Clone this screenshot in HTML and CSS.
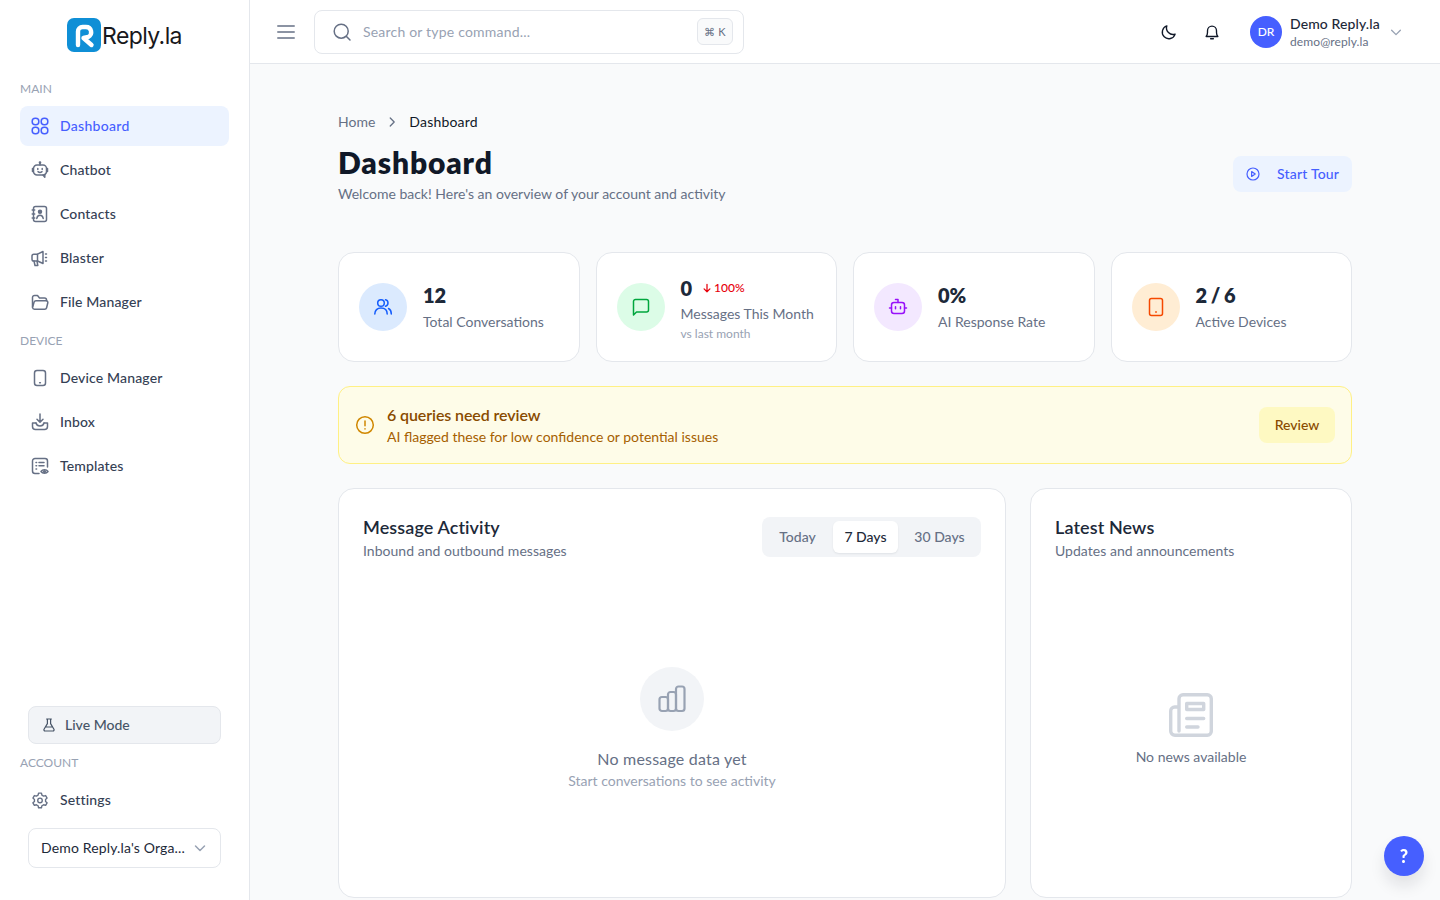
FILE: index.html
```html
<!DOCTYPE html>
<html lang="en">
<head>
  <meta charset="UTF-8">
  <meta name="viewport" content="width=device-width, initial-scale=1.0">
  <title>Reply.la Dashboard</title>
  <link rel="stylesheet" href="styles.css">
</head>
<body>
  <div class="app">

    <!-- Sidebar -->
    <aside class="sidebar">
      <div class="logo">
        <svg class="logo-mark" width="34" height="34" viewBox="0 0 34 34">
          <rect width="34" height="34" rx="7" fill="#0f8fd6"/>
          <path d="M11 27V13.500A4.500 4.500 0 0 1 15.500 9H19a5.200 5.200 0 0 1 2.200 9.900L16.500 20l8 7" fill="none" stroke="#fff" stroke-width="4.400" stroke-linecap="round" stroke-linejoin="round"/>
        </svg>
        <span class="logo-text">Reply.la</span>
      </div>

      <div class="nav-label">MAIN</div>
      <nav class="nav">
        <a class="nav-item active" href="#">
          <svg class="icon" viewBox="0 0 20 20"><rect x="2.200" y="2.200" width="6.600" height="6.600" rx="3"/><rect x="11.200" y="2.200" width="6.600" height="6.600" rx="3"/><rect x="2.200" y="11.200" width="6.600" height="6.600" rx="3"/><rect x="11.200" y="11.200" width="6.600" height="6.600" rx="3"/></svg>
          Dashboard
        </a>
        <a class="nav-item" href="#">
          <svg class="icon" viewBox="0 0 20 20"><path d="M10 2.500v2.400"/><circle cx="10" cy="2.600" r=".6"/><path d="M7 5h6a3.500 3.500 0 0 1 3.500 3.500v3A3.500 3.500 0 0 1 13 15H7.500a3.500 3.500 0 0 1-4-3.500v-3A3.500 3.500 0 0 1 7 5z"/><path d="M3.200 8.500H2.500v3h.7M16.800 8.500h.7v3h-.7M13 15l1.800 2.200V14.500"/><path d="M7.800 8.600v1M12.200 8.600v1M8 11.700c1.200.9 2.800.9 4 0"/></svg>
          Chatbot
        </a>
        <a class="nav-item" href="#">
          <svg class="icon" viewBox="0 0 20 20"><rect x="3.500" y="2.500" width="13" height="15" rx="2"/><path d="M2.200 6h2.500M2.200 10h2.500M2.200 14h2.500"/><circle cx="10" cy="7.800" r="1.500" fill="currentColor"/><path d="M6.800 14.500c.3-2.200 1.500-3.200 3.200-3.200s2.900 1 3.200 3.200"/></svg>
          Contacts
        </a>
        <a class="nav-item" href="#">
          <svg class="icon" viewBox="0 0 20 20"><path d="M13 3.500v12L7.500 13H3.800A1.800 1.800 0 0 1 2 11.200V8a1.800 1.800 0 0 1 1.800-1.800h3.700L13 3.500z"/><path d="M7.500 6.200V13M4 13l1 4.500h2.800L7 13.200"/><path d="M15.500 6h2.300M15.500 9.500h2.300M15.500 13h2.300" stroke-dasharray="1 1.300"/></svg>
          Blaster
        </a>
        <a class="nav-item" href="#">
          <svg class="icon" viewBox="0 0 20 20"><path d="M2.500 15V5.500a2 2 0 0 1 2-2h3l2 2.500h5a2 2 0 0 1 2 2v.800"/><path d="M2.500 15.500l1.600-5.500a2 2 0 0 1 1.900-1.200h10.300a1.500 1.500 0 0 1 1.500 1.900l-1.200 5a2 2 0 0 1-1.900 1.500H4.500a2 2 0 0 1-2-1.700z"/></svg>
          File Manager
        </a>
      </nav>

      <div class="nav-label nav-label-gap">DEVICE</div>
      <nav class="nav">
        <a class="nav-item" href="#">
          <svg class="icon" viewBox="0 0 20 20"><rect x="4.500" y="2.500" width="11" height="15" rx="2.500"/><path d="M9.600 14.800h.8"/></svg>
          Device Manager
        </a>
        <a class="nav-item" href="#">
          <svg class="icon" viewBox="0 0 20 20"><path d="M10 2v8M7 7.200l3 3 3-3"/><path d="M6 11H2.500v3.500a3 3 0 0 0 3 3h9a3 3 0 0 0 3-3V11H14"/><path d="M6 11c.5 2 2 3 4 3s3.500-1 4-3"/></svg>
          Inbox
        </a>
        <a class="nav-item" href="#">
          <svg class="icon" viewBox="0 0 20 20"><path d="M9 17.500H5A2.500 2.500 0 0 1 2.500 15V5A2.500 2.500 0 0 1 5 2.500h10A2.500 2.500 0 0 1 17.500 5v6"/><path d="M6 6.500h.6M6 9.800h.6M6 13h.6M9 6.500h5M9 9.800h5"/><path d="M11 15.500c1.600-2.400 5.400-2.400 7 0-1.600 2.400-5.400 2.400-7 0z"/><circle cx="14.500" cy="15.500" r=".8"/></svg>
          Templates
        </a>
      </nav>

      <div class="sidebar-bottom">
        <button class="live-mode">
          <svg class="icon" viewBox="0 0 20 20"><path d="M7 2.500h6M8 2.500v5.800l-4.200 7A1.500 1.500 0 0 0 5 17.500h10a1.500 1.500 0 0 0 1.200-2.200L12 8.300V2.500M5.800 12.500h8.400"/></svg>
          Live Mode
        </button>
        <div class="nav-label nav-label-account">ACCOUNT</div>
        <a class="nav-item" href="#">
          <svg class="icon" viewBox="-1 -1 22 22"><path d="M8.400 2.500h3.200l.5 2.200 1.900 1.100 2.200-.7 1.600 2.800-1.700 1.500v2.200l1.700 1.500-1.600 2.800-2.200-.7-1.900 1.100-.5 2.200H8.400l-.5-2.200L6 15.200l-2.200.7-1.600-2.800 1.700-1.500V9.400L2.200 7.900l1.600-2.800 2.200.7 1.900-1.100z"/><circle cx="10" cy="10.500" r="2.500"/></svg>
          Settings
        </a>
        <button class="org-select">
          <span>Demo Reply.la's Orga...</span>
          <svg class="chevron" viewBox="0 0 16 16"><path d="M3.500 6l4.500 4.500L12.500 6"/></svg>
        </button>
      </div>
    </aside>

    <div class="page">
      <!-- Top bar -->
      <header class="topbar">
        <svg class="menu-icon" viewBox="0 0 18 16"><path d="M.8 2h16.400M.8 8h16.400M.8 14h16.400"/></svg>
        <div class="search">
          <svg class="search-icon" viewBox="0 0 20 20"><circle cx="9.200" cy="9.200" r="7"/><path d="M14.500 14.500l3.500 3.500"/></svg>
          <span class="search-text">Search or type command...</span>
          <kbd class="kbd">⌘ K</kbd>
        </div>
        <div class="topbar-right">
          <svg class="top-icon" viewBox="0 0 20 20"><path d="M16.800 12.400A7.300 7.300 0 0 1 7.600 3.200 7.300 7.300 0 1 0 16.800 12.400z"/></svg>
          <svg class="top-icon bell" viewBox="0 0 20 20"><path d="M3.500 15h13c-1-1.200-1.500-2-1.500-4.500V8.500a5 5 0 0 0-10 0v2c0 2.500-.5 3.300-1.500 4.500zM8.500 17.500h3"/></svg>
          <div class="avatar">DR</div>
          <div class="user">
            <div class="user-name">Demo Reply.la</div>
            <div class="user-mail">demo@reply.la</div>
          </div>
          <svg class="chevron user-chevron" viewBox="0 0 16 16"><path d="M3 6l5 5 5-5"/></svg>
        </div>
      </header>

      <main class="main">
        <div class="breadcrumb">
          <span class="crumb-home">Home</span>
          <svg class="crumb-sep" viewBox="0 0 16 16"><path d="M6 3.500l4.500 4.500L6 12.500"/></svg>
          <span class="crumb-current">Dashboard</span>
        </div>

        <div class="page-head">
          <div>
            <h1 class="page-title">Dashboard</h1>
            <p class="page-sub">Welcome back! Here's an overview of your account and activity</p>
          </div>
          <button class="tour-btn">
            <svg class="icon" viewBox="0 0 20 20"><circle cx="10" cy="10" r="7.500"/><path d="M8.300 7l4.500 3-4.500 3z"/></svg>
            Start Tour
          </button>
        </div>

        <!-- Stats -->
        <section class="stats">
          <div class="stat-card">
            <div class="stat-icon blue">
              <svg viewBox="0 0 20 20"><circle cx="8" cy="6" r="3.300"/><path d="M1.800 17c0-3.700 2.500-6 6.200-6s6.200 2.300 6.200 6"/><path d="M12.500 2.800a3.300 3.300 0 0 1 0 6.400M15.500 11.500c1.800.9 2.800 2.800 2.800 5.500"/></svg>
            </div>
            <div class="stat-text">
              <div class="stat-value">12</div>
              <div class="stat-label">Total Conversations</div>
            </div>
          </div>
          <div class="stat-card">
            <div class="stat-icon green">
              <svg viewBox="0 0 20 20"><path d="M2.500 18V4.500a2 2 0 0 1 2-2h11a2 2 0 0 1 2 2V13a2 2 0 0 1-2 2H5.500z"/></svg>
            </div>
            <div class="stat-tall">
              <div class="stat-top">
                <span class="stat-value">0</span>
                <span class="trend">
                  <svg viewBox="0 0 12 12"><path d="M6 1.500v9M2.500 7L6 10.500 9.500 7"/></svg>
                  100%
                </span>
              </div>
              <div class="stat-label">Messages This Month</div>
              <div class="stat-note">vs last month</div>
            </div>
          </div>
          <div class="stat-card">
            <div class="stat-icon purple">
              <svg viewBox="0 0 20 20"><path d="M10 5.500V2.500H7.500"/><rect x="3.500" y="5.500" width="13" height="11" rx="2.500"/><path d="M1.500 11h2M16.500 11h2M7.500 9.800v2M12.500 9.800v2"/></svg>
            </div>
            <div class="stat-text">
              <div class="stat-value">0%</div>
              <div class="stat-label">AI Response Rate</div>
            </div>
          </div>
          <div class="stat-card">
            <div class="stat-icon orange">
              <svg viewBox="0 0 20 20"><rect x="3.500" y="1.500" width="13" height="17" rx="2"/><path d="M9.700 15h.6"/></svg>
            </div>
            <div class="stat-text">
              <div class="stat-value stat-ratio">2 / 6</div>
              <div class="stat-label">Active Devices</div>
            </div>
          </div>
        </section>

        <!-- Alert -->
        <section class="alert">
          <svg class="alert-icon" viewBox="0 0 20 20"><circle cx="10" cy="10" r="8.300"/><path d="M10 6v4.800M10 13.800v.2"/></svg>
          <div class="alert-body">
            <div class="alert-title">6 queries need review</div>
            <div class="alert-text">AI flagged these for low confidence or potential issues</div>
          </div>
          <button class="review-btn">Review</button>
        </section>

        <!-- Panels -->
        <section class="panels">
          <div class="panel">
            <div class="panel-head">
              <div>
                <h2 class="panel-title">Message Activity</h2>
                <p class="panel-sub">Inbound and outbound messages</p>
              </div>
              <div class="tabs">
                <span class="tab">Today</span>
                <span class="tab tab-on">7 Days</span>
                <span class="tab">30 Days</span>
              </div>
            </div>
            <div class="empty">
              <div class="empty-circle">
                <svg viewBox="0 0 28 28"><rect x="1.500" y="12" width="8.500" height="14" rx="2.500"/><rect x="10" y="7" width="8" height="19" rx="2.500"/><rect x="18" y="1.500" width="8.500" height="24.500" rx="2.500"/></svg>
              </div>
              <div class="empty-title">No message data yet</div>
              <div class="empty-text">Start conversations to see activity</div>
            </div>
          </div>

          <div class="panel">
            <div class="panel-head">
              <div>
                <h2 class="panel-title">Latest News</h2>
                <p class="panel-sub">Updates and announcements</p>
              </div>
            </div>
            <div class="empty">
              <svg class="news-icon" viewBox="0 0 44 44"><path d="M10 38V5.700a4 4 0 0 1 4-4h24.300a4 4 0 0 1 4 4v32.600a4 4 0 0 1-4 4H6A4.300 4.300 0 0 1 1.700 38V18a4 4 0 0 1 4-4H10"/><rect x="17.700" y="10.500" width="17" height="6"/><path d="M17.700 25.500h17M17.700 34H29"/></svg>
              <div class="news-text">No news available</div>
            </div>
          </div>
        </section>
      </main>
    </div>
  </div>

  <button class="help-btn">?</button>
</body>
</html>
```

FILE: styles.css
```css
* {
  box-sizing: border-box;
}

html, body {
  height: 100%;
}

body {
  margin: 0;
  font-family: "Lato", "Noto Sans", sans-serif;
  font-size: 14px;
  line-height: 20px;
  color: #101828;
  background-color: #f9fafb;
  overflow: hidden;
}

a {
  text-decoration: none;
  color: inherit;
}

button {
  font: inherit;
  cursor: pointer;
}

h1, h2, p {
  margin: 0;
}

svg {
  fill: none;
  stroke: currentColor;
  stroke-width: 1.5;
  stroke-linecap: round;
  stroke-linejoin: round;
  flex-shrink: 0;
}

.app {
  display: flex;
  height: 900px;
}

/* Sidebar */
.sidebar {
  width: 250px;
  flex-shrink: 0;
  display: flex;
  flex-direction: column;
  padding: 0 20px;
  background-color: #fff;
  border-right: 1px solid #e4e7ec;
}

.logo {
  height: 71px;
  padding-top: 18px;
  display: flex;
  justify-content: center;
  align-items: flex-start;
  gap: 1px;
}

.logo-mark {
  stroke: none;
}

.logo-text {
  font-family: "Inter", sans-serif;
  font-size: 23px;
  line-height: 36px;
  letter-spacing: -0.6px;
  color: #18181b;
}

.nav-label {
  margin-top: 10px;
  margin-bottom: 9px;
  font-size: 12px;
  line-height: 16px;
  color: #98a2b3;
}

.nav-label-gap {
  margin-top: 11px;
}

.nav-label-account {
  margin-top: 11px;
}

.nav {
  display: flex;
  flex-direction: column;
  gap: 4px;
}

.nav-item {
  height: 40px;
  display: flex;
  align-items: center;
  gap: 10px;
  padding: 0 10px;
  border-radius: 8px;
  font-weight: 500;
  font-size: 14px;
  letter-spacing: 0.15px;
  color: #344054;
}

.nav-item .icon {
  color: #667085;
}

.nav-item.active {
  background-color: #ecf3ff;
  color: #465fff;
  letter-spacing: 0.3px;
}

.nav-item.active .icon {
  color: #465fff;
}

.icon {
  width: 20px;
  height: 20px;
}

.sidebar-bottom {
  margin-top: auto;
  padding-bottom: 32px;
}

.live-mode {
  width: 193px;
  height: 38px;
  margin-left: 8px;
  display: flex;
  align-items: center;
  gap: 8px;
  padding: 0 12px;
  border: 1px solid #e4e7ec;
  border-radius: 8px;
  background-color: #f2f4f7;
  font-weight: 500;
  color: #475467;
}

.live-mode .icon {
  width: 16px;
  height: 16px;
}

.sidebar-bottom .nav-item {
  margin-bottom: 8px;
}

.org-select {
  width: 193px;
  height: 40px;
  margin-left: 8px;
  display: flex;
  align-items: center;
  justify-content: space-between;
  padding: 0 12px;
  border: 1px solid #e4e7ec;
  border-radius: 8px;
  background-color: #fff;
  letter-spacing: 0.15px;
  color: #1d2939;
}

.chevron {
  width: 16px;
  height: 16px;
  color: #98a2b3;
}

/* Top bar */
.page {
  flex: 1;
  min-width: 0;
  display: flex;
  flex-direction: column;
}

.topbar {
  height: 64px;
  flex-shrink: 0;
  display: flex;
  align-items: center;
  padding: 0 37px 0 27px;
  background-color: #fff;
  border-bottom: 1px solid #e4e7ec;
}

.menu-icon {
  width: 18px;
  height: 16px;
  margin-right: 19px;
  color: #667085;
}

.search {
  width: 430px;
  height: 44px;
  display: flex;
  align-items: center;
  padding: 0 10px 0 17px;
  border: 1px solid #e4e7ec;
  border-radius: 8px;
  background-color: #fff;
}

.search-icon {
  width: 20px;
  height: 20px;
  margin-right: 11px;
  color: #667085;
}

.search-text {
  flex: 1;
  letter-spacing: 0.2px;
  color: #98a2b3;
}

.kbd {
  width: 36px;
  height: 27px;
  display: flex;
  align-items: center;
  justify-content: center;
  border: 1px solid #e4e7ec;
  border-radius: 6px;
  background-color: #f9fafb;
  font-family: "Lato", sans-serif;
  font-size: 11px;
  color: #667085;
}

.topbar-right {
  margin-left: auto;
  display: flex;
  align-items: center;
}

.top-icon {
  width: 18px;
  height: 18px;
  margin-right: 25px;
  color: #101828;
}

.bell {
  margin-right: 29px;
}

.avatar {
  width: 32px;
  height: 32px;
  margin-right: 8px;
  display: flex;
  align-items: center;
  justify-content: center;
  border-radius: 50%;
  background-color: #465fff;
  color: #fff;
  font-size: 12px;
  font-weight: 500;
}

.user {
  width: 90px;
  padding-top: 2px;
}

.user-name {
  font-weight: 500;
  line-height: 18px;
  letter-spacing: 0.1px;
  color: #1d2939;
}

.user-mail {
  margin-top: 1px;
  font-size: 12px;
  line-height: 16px;
  letter-spacing: 0.1px;
  color: #667085;
}

.user-chevron {
  width: 14px;
  height: 14px;
  margin-left: 9px;
}

/* Main */
.main {
  flex: 1;
  padding: 48px 88px 0;
}

.breadcrumb {
  display: flex;
  align-items: center;
  gap: 10px;
  margin-bottom: 12px;
}

.crumb-home {
  color: #667085;
}

.crumb-current {
  letter-spacing: 0.2px;
}

.crumb-sep {
  width: 14px;
  height: 14px;
  color: #667085;
}

.page-head {
  display: flex;
  justify-content: space-between;
  align-items: center;
  margin-bottom: 48px;
}

.page-title {
  font-size: 30px;
  line-height: 36px;
  font-weight: 800;
  letter-spacing: 0.85px;
  color: #101828;
}

.page-sub {
  margin-top: 4px;
  color: #667085;
}

.tour-btn {
  width: 119px;
  height: 36px;
  display: flex;
  align-items: center;
  gap: 16px;
  padding: 0 12px;
  border: 0;
  border-radius: 8px;
  background-color: #ecf3ff;
  font-weight: 500;
  letter-spacing: 0.2px;
  white-space: nowrap;
  color: #465fff;
}

.tour-btn .icon {
  width: 16px;
  height: 16px;
}

/* Stats */
.stats {
  display: grid;
  grid-template-columns: repeat(4, 1fr);
  gap: 16px;
  margin-bottom: 24px;
}

.stat-card {
  height: 110px;
  display: flex;
  align-items: center;
  gap: 16px;
  padding: 0 20px;
  border: 1px solid #e4e7ec;
  border-radius: 16px;
  background-color: #fff;
}

.stat-icon {
  width: 48px;
  height: 48px;
  flex-shrink: 0;
  display: flex;
  align-items: center;
  justify-content: center;
  border-radius: 50%;
}

.stat-icon svg {
  width: 20px;
  height: 20px;
}

.blue { background-color: #dbeafe; color: #155dfc; }
.green { background-color: #dcfce7; color: #00a63e; }
.purple { background-color: #f3e8ff; color: #9810fa; }
.orange { background-color: #ffedd4; color: #f54900; }

.stat-text {
  margin-bottom: 2px;
}

.stat-value {
  font-size: 20px;
  line-height: 28px;
  font-weight: 800;
  color: #1d2939;
}

.stat-ratio {
  word-spacing: -1px;
}

.stat-label {
  margin-top: 3px;
  color: #667085;
}

.stat-tall {
  padding-top: 2px;
}

.stat-tall .stat-label {
  margin-top: 2px;
}

.stat-top {
  display: flex;
  align-items: center;
  gap: 10px;
}

.trend {
  display: flex;
  align-items: center;
  gap: 2px;
  font-size: 12px;
  font-weight: 500;
  color: #e7000b;
}

.trend svg {
  width: 10px;
  height: 10px;
}

.stat-note {
  font-size: 12px;
  line-height: 16px;
  margin-top: 2px;
  color: #98a2b3;
}

/* Alert */
.alert {
  height: 78px;
  display: flex;
  align-items: center;
  gap: 12px;
  padding: 0 16px;
  margin-bottom: 24px;
  border: 1px solid #fff085;
  border-radius: 12px;
  background-color: #fefce8;
}

.alert-icon {
  width: 20px;
  height: 20px;
  color: #d08700;
}

.alert-body {
  flex: 1;
}

.alert-title {
  font-size: 16px;
  line-height: 24px;
  font-weight: 600;
  letter-spacing: -0.1px;
  color: #894b00;
}

.alert-text {
  color: #a65f00;
}

.review-btn {
  width: 76px;
  height: 36px;
  border: 0;
  border-radius: 8px;
  background-color: #fef9c2;
  font-weight: 500;
  color: #894b00;
}

/* Panels */
.panels {
  display: grid;
  grid-template-columns: 668px 322px;
  gap: 24px;
}

.panel {
  height: 410px;
  display: flex;
  flex-direction: column;
  padding: 24px;
  border: 1px solid #e4e7ec;
  border-radius: 16px;
  background-color: #fff;
}

.panel-head {
  display: flex;
  justify-content: space-between;
  align-items: center;
  margin-bottom: 24px;
}

.panel-title {
  font-size: 18px;
  line-height: 28px;
  font-weight: 600;
  letter-spacing: 0.1px;
  color: #1d2939;
}

.panel-sub {
  letter-spacing: 0.03px;
  color: #667085;
}

.tabs {
  height: 40px;
  display: grid;
  grid-template-columns: 63px 65px 75px;
  gap: 4px;
  padding: 4px;
  border-radius: 8px;
  background-color: #f2f4f7;
}

.tab {
  height: 32px;
  display: flex;
  align-items: center;
  justify-content: center;
  border-radius: 6px;
  font-weight: 500;
  color: #667085;
}

.tab-on {
  background-color: #fff;
  color: #1d2939;
  box-shadow: 0 1px 2px rgba(16, 24, 40, 0.08);
}

.empty {
  flex: 1;
  display: flex;
  flex-direction: column;
  align-items: center;
  justify-content: center;
}

.empty-circle {
  width: 64px;
  height: 64px;
  display: flex;
  align-items: center;
  justify-content: center;
  border-radius: 50%;
  background-color: #f2f4f7;
  color: #98a2b3;
  margin-bottom: 16px;
}

.empty-circle svg {
  width: 28px;
  height: 28px;
  stroke-width: 2.2;
}

.empty-title {
  font-size: 16px;
  line-height: 24px;
  letter-spacing: 0.2px;
  color: #667085;
}

.empty-text {
  color: #98a2b3;
}

.news-icon {
  width: 44px;
  height: 44px;
  margin-top: 2px;
  margin-bottom: 10px;
  color: #d0d5dd;
  stroke-width: 3.4;
}

.news-text {
  color: #667085;
}

.help-btn {
  position: fixed;
  right: 16px;
  bottom: 24px;
  width: 40px;
  height: 40px;
  border: 0;
  border-radius: 50%;
  background-color: #465fff;
  color: #fff;
  font-size: 18px;
  font-weight: 900;
  box-shadow: 0 10px 15px rgba(16, 24, 40, 0.1);
}
```
